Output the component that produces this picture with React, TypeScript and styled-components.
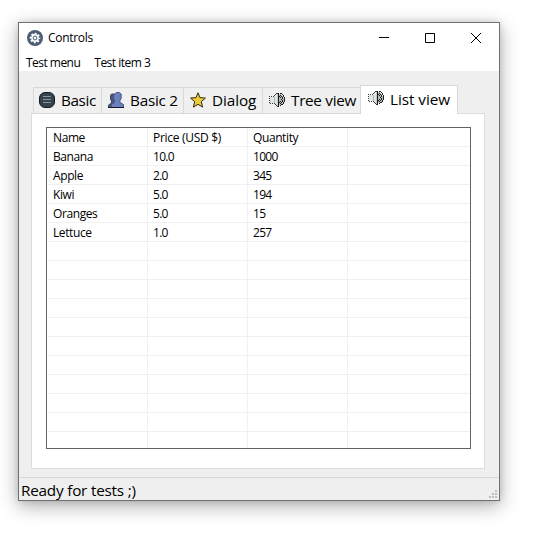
import React from 'react';
import styled, { createGlobalStyle } from 'styled-components';

const Global = createGlobalStyle`
  *, *::before, *::after { box-sizing: border-box; }
  body {
    margin: 0;
    background: #fff;
    color: #000;
    font-family: "Open Sans", "Noto Sans", sans-serif;
    overflow: hidden;
  }
  svg { display: block; flex: none; }
`;

const Desktop = styled.main`
  width: 534px;
  height: 535px;
  padding: 22px 34px 34px 18px;
  background: #fff;
`;

const Window = styled.div`
  width: 482px;
  height: 479px;
  display: flex;
  flex-direction: column;
  border: 1px solid #707070;
  background: #efefef;
  box-shadow: 0 5px 18px rgba(0, 0, 0, 0.32), 0 0 6px rgba(0, 0, 0, 0.12);
`;

const TitleBar = styled.header`
  display: flex;
  align-items: center;
  height: 29px;
  padding-left: 8px;
  background: #fff;
`;

const Title = styled.div`
  flex: 1;
  margin-left: 5px;
`;

const Label = styled.span<{ $size: number; $spacing?: number }>`
  display: block;
  white-space: pre;
  font-size: ${(p) => p.$size}px;
  letter-spacing: ${(p) => p.$spacing ?? 0}px;
  line-height: 18px;
`;

const CaptionButton = styled.button`
  display: grid;
  place-items: center;
  width: 46px;
  height: 29px;
  padding: 0;
  border: 0;
  background: none;
`;

const MenuBar = styled.nav`
  display: flex;
  gap: 14px;
  height: 19px;
  padding: 2px 0 0 7px;
  background: #fff;
`;

const Body = styled.div`
  flex: 1;
  display: flex;
  flex-direction: column;
  padding: 14px 14px 8px 12px;
`;

const TabStrip = styled.div`
  display: flex;
  align-items: flex-end;
  height: 29px;
  padding-left: 2px;
  margin-bottom: -1px;
`;

const Tab = styled.div<{ $width: number; $active?: boolean; $first?: boolean }>`
  position: relative;
  display: flex;
  gap: 6px;
  width: ${(p) => p.$width}px;
  height: ${(p) => (p.$active ? 29 : 27)}px;
  padding: ${(p) => (p.$active ? '4px 0 0 7px' : p.$first ? '4px 0 0 5px' : '4px 0 0 6px')};
  border: 1px solid #d9d9d9;
  border-width: ${(p) => (p.$active ? '1px 1px 0 1px' : '1px 0 1px 1px')};
  background: ${(p) => (p.$active ? '#fff' : '#f0f0f0')};
  ${Label} { margin-top: ${(p) => (p.$active ? 0 : -1)}px; }
`;

const Panel = styled.section`
  flex: 1;
  padding: 13px 13px 19px 14px;
  border: 1px solid #dcdcdc;
  background: #fff;
`;

const Grid = styled.div`
  height: 322px;
  overflow: hidden;
  border: 1px solid #646464;
`;

const Row = styled.div`
  display: grid;
  grid-template-columns: 101px 100px 100px 1fr;
  height: 19px;
  border-bottom: 1px solid #f0f0f0;
`;

const Cell = styled.div`
  height: 19px;
  padding: 1px 0 0 5px;
  border-right: 1px solid #f0f0f0;
  &:first-child { padding-left: 6px; }
  &:last-child { border-right: 0; }
`;

const StatusBar = styled.footer`
  display: flex;
  justify-content: space-between;
  align-items: flex-end;
  height: 23px;
  padding: 0 2px 0 2px;
  border-top: 1px solid #d7d7d7;
  ${Label} { margin-bottom: 1px; }
`;

const AppIcon = () => (
  <svg width="16" height="16" viewBox="0 0 16 16">
    <circle cx="8" cy="8" r="8" fill="#4d5c75" />
    <circle cx="8" cy="8" r="3.9" fill="#fff" />
    <circle cx="8" cy="8" r="4.5" fill="none" stroke="#fff" strokeWidth="1.7" strokeDasharray="1.9 1.634" strokeDashoffset="0.95" />
    <circle cx="8" cy="8" r="1.9" fill="#fff" stroke="#4d5c75" strokeWidth="1" />
  </svg>
);

const ListIcon = () => (
  <svg width="16" height="16" viewBox="0 0 16 16">
    <rect x=".5" y=".5" width="15" height="15" rx="5.6" fill="#34444d" stroke="#10161a" />
    <path d="M4 4.5h8M4 7.5h8M4 10.5h8" stroke="#899399" />
  </svg>
);

const PeopleIcon = () => (
  <svg width="16" height="16" viewBox="0 0 16 16">
    <path d="M2.5 3.5l1-1.5h3L8 3v7l3 2v3.5H.5V13l3-2V9l-1-2z" fill="#4a5780" stroke="#29304a" strokeWidth=".8" />
    <path d="M7.2 1.5l1.3-1h3l1.7 1.5v4.5l-1.2 2v2l3.5 2v3H4v-3l3-2V8L6 6.5V4z" fill="#6c80bd" />
    <path d="M7 1.8L8.5.5h3l1.7 1.5v4.5l-1.2 2v2l3.5 2v3" fill="none" stroke="#36426d" strokeWidth=".8" />
    <path d="M0 15.5h16" stroke="#161a28" />
  </svg>
);

const StarIcon = () => (
  <svg width="16" height="16" viewBox="0 0 16 16">
    <path d="M8 .8l2 4.8 5.4.5-4.1 3.6 1.3 5.4L8 12.3l-4.6 2.8 1.3-5.4L.6 6.1 6 5.6z" fill="#ebcb3d" stroke="#30280e" strokeWidth="1" />
  </svg>
);

const SpeakerIcon = () => (
  <svg width="16" height="16" viewBox="0 -1 16 16" shapeRendering="crispEdges">
    <path d="M1 4h4l3-3h1v12H8l-3-3H1z" fill="#dfe5e5" />
    <path d="M5 4h1v6H5z" fill="#aeb9b9" />
    <path d="M0 3h1v1H0zM2 3h1v1H2zM4 3h1v1H4zM0 5h1v1H0zM0 7h1v1H0zM0 9h1v1H0zM1 10h1v1H1zM3 10h1v1H3zM5 10h1v1H5zM5 2h1v1H5zM6 1h1v1H6zM7 0h2v1H7zM6 11h1v1H6zM7 12h1v1H7zM8 13h1v1H8z" fill="#383b3b" />
    <path d="M8 1h1v12H8z" fill="#c5cccc" />
    <path d="M9 0h1v14H9z" fill="#191919" />
    <path d="M10 1h2v1h1v1h1v2h1v4h-1v2h-2v1h-2z" fill="#b4baba" />
    <path d="M11 0h2v1h-2zM13 1h1v1h-1zM14 2h1v2h-1zM15 4h1v5h-1zM14 9h1v2h-1zM12 11h2v1h-2zM11 12h1v1h-1zM11 2h1v1h-1zM12 3h1v1h-1zM13 4h1v2h-1zM13 7h1v2h-1zM12 9h1v1h-1zM11 10h1v1h-1zM10 3h1v1h-1zM11 4h1v1h-1zM12 6h1v1h-1zM11 8h1v1h-1zM10 9h1v1h-1z" fill="#222" />
  </svg>
);

const Minimize = () => (
  <svg width="10" height="10" viewBox="0 0 10 10"><path d="M0 4.5h10" stroke="#000" /></svg>
);
const Maximize = () => (
  <svg width="10" height="10" viewBox="0 0 10 10"><path d="M.5.5h9v9h-9z" fill="none" stroke="#000" /></svg>
);
const Close = () => (
  <svg width="10" height="10" viewBox="0 0 10 10"><path d="M0 0l10 10M10 0L0 10" stroke="#000" /></svg>
);

const Grip = () => (
  <svg width="8" height="10" viewBox="0 0 8 10">
    <path d="M6 0h2v2H6zM3 3h2v2H3zM6 3h2v2H6zM0 6h2v2H0zM3 6h2v2H3zM6 6h2v2H6z" fill="#bfbfbf" />
  </svg>
);

const tabs = [
  { name: 'Basic', width: 68, spacing: -0.4, Icon: ListIcon },
  { name: 'Basic 2', width: 82, spacing: -0.25, Icon: PeopleIcon },
  { name: 'Dialog', width: 79, spacing: -0.1, Icon: StarIcon },
  { name: 'Tree view', width: 98, spacing: -0.3, Icon: SpeakerIcon },
  { name: 'List view', width: 98, spacing: -0.05, Icon: SpeakerIcon },
];

const rows = [
  ['Name', 'Price (USD $)', 'Quantity'],
  ['Banana', '10.0', '1000'],
  ['Apple', '2.0', '345'],
  ['Kiwi', '5.0', '194'],
  ['Oranges', '5.0', '15'],
  ['Lettuce', '1.0', '257'],
  ...Array.from({ length: 11 }, () => ['', '', '']),
];

const cellSpacing = (text: string) => {
  if (/^[\d.]+$/.test(text)) return -0.7;
  return text.startsWith('Price') ? -0.3 : -0.4;
};

export default function App() {
  return (
    <>
      <Global />
      <Desktop>
        <Window>
          <TitleBar>
            <AppIcon />
            <Title><Label $size={12} $spacing={-0.3}>Controls</Label></Title>
            <CaptionButton aria-label="Minimize"><Minimize /></CaptionButton>
            <CaptionButton aria-label="Maximize"><Maximize /></CaptionButton>
            <CaptionButton aria-label="Close"><Close /></CaptionButton>
          </TitleBar>
          <MenuBar>
            <Label $size={12} $spacing={-0.53}>Test menu</Label>
            <Label $size={12} $spacing={-0.5}>Test item 3</Label>
          </MenuBar>
          <Body>
            <TabStrip>
              {tabs.map(({ name, width, spacing, Icon }, i) => (
                <Tab key={name} $width={width} $active={i === 4} $first={i === 0}>
                  <Icon />
                  <Label $size={15.3} $spacing={spacing}>{name}</Label>
                </Tab>
              ))}
            </TabStrip>
            <Panel>
              <Grid>
                {rows.map((row, i) => (
                  <Row key={i}>
                    {row.map((text, j) => (
                      <Cell key={j}><Label $size={12} $spacing={cellSpacing(text)}>{text}</Label></Cell>
                    ))}
                    <Cell />
                  </Row>
                ))}
              </Grid>
            </Panel>
          </Body>
          <StatusBar>
            <Label $size={15.3} $spacing={-0.22}>Ready for tests ;)</Label>
            <Grip />
          </StatusBar>
        </Window>
      </Desktop>
    </>
  );
}
